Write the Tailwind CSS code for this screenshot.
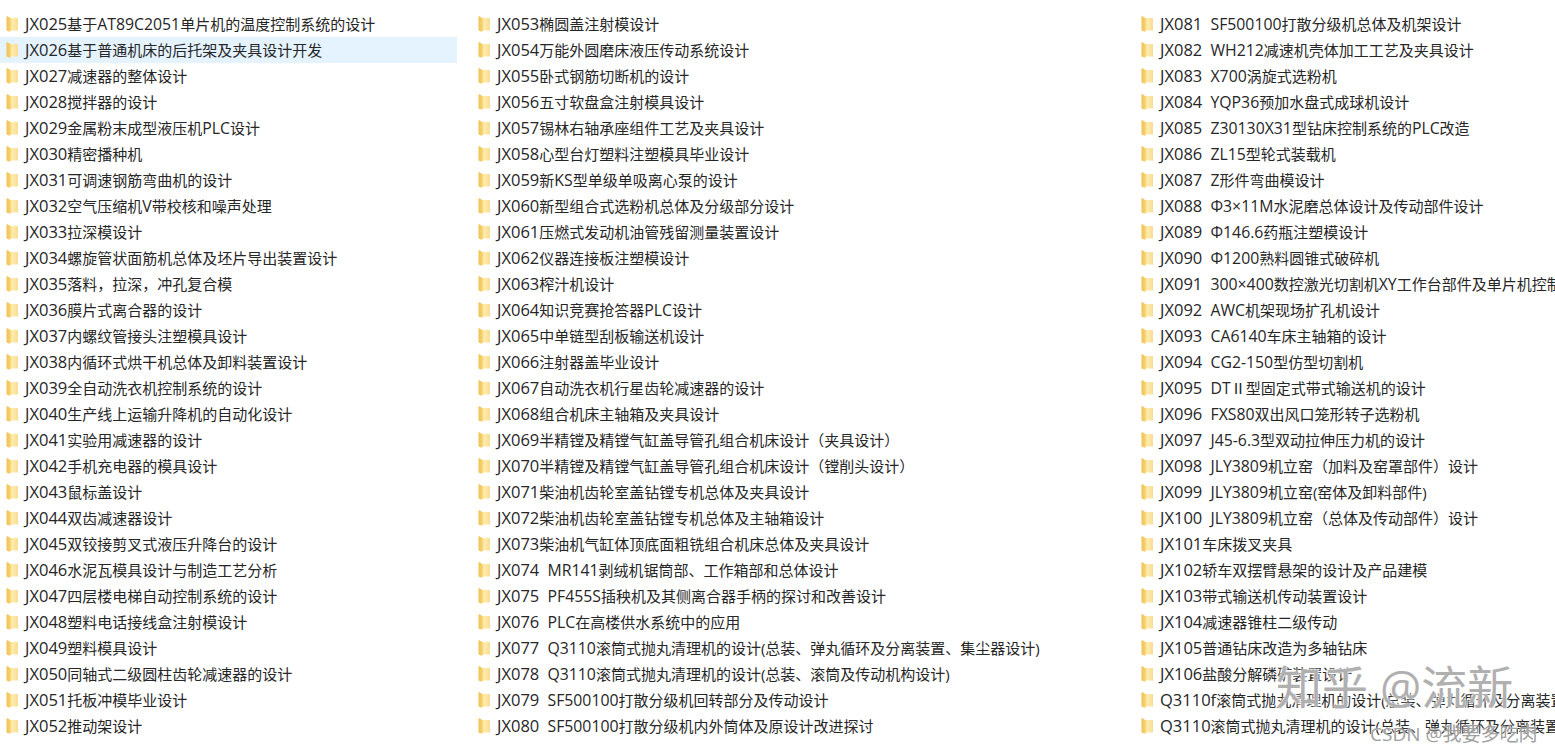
<!DOCTYPE html>
<html lang="zh-CN">
<head>
    <meta charset="UTF-8">
    <title>JX 文件夹列表</title>
    <script src="https://cdn.jsdelivr.net/npm/@tailwindcss/browser@4"></script>
</head>
<body class="bg-white overflow-hidden">
    <svg class="absolute h-0 w-0">
        <defs>
            <linearGradient id="folderFill" x1="0" x2="1" y1="0" y2="0">
                <stop offset="0" stop-color="#f0c252"/>
                <stop offset="0.28" stop-color="#f5cf6c"/>
                <stop offset="0.5" stop-color="#feecb0"/>
                <stop offset="1" stop-color="#f9dc90"/>
            </linearGradient>
        </defs>
    </svg>
    <div class="relative h-[750px] w-[1555px] overflow-hidden pt-[11px] font-['Open_Sans','Noto_Sans_CJK_SC',sans-serif] text-[15px] leading-[26px] text-[#262626]">
        <div class="grid grid-cols-[472px_663px_420px]">
            <div id="col1"></div>
            <div id="col2"></div>
            <div id="col3"></div>
        </div>
        <div class="absolute left-[1276px] top-[658px] whitespace-pre text-[46px] leading-[56px] text-[#b0b0b0] [text-shadow:0_0_3px_#fff,0_0_3px_#fff]">知乎 @流新</div>
        <div class="absolute left-[1370px] top-[722px] whitespace-pre text-[19px] leading-[24px] text-[#a0a0a0] [text-shadow:0_0_2px_#fff]">CSDN @我要多吃肉</div>
    </div>

    <script>
        const col1 = ['JX025基于AT89C2051单片机的温度控制系统的设计','JX026基于普通机床的后托架及夹具设计开发','JX027减速器的整体设计','JX028搅拌器的设计','JX029金属粉末成型液压机PLC设计','JX030精密播种机','JX031可调速钢筋弯曲机的设计','JX032空气压缩机V带校核和噪声处理','JX033拉深模设计','JX034螺旋管状面筋机总体及坯片导出装置设计','JX035落料，拉深，冲孔复合模','JX036膜片式离合器的设计','JX037内螺纹管接头注塑模具设计','JX038内循环式烘干机总体及卸料装置设计','JX039全自动洗衣机控制系统的设计','JX040生产线上运输升降机的自动化设计','JX041实验用减速器的设计','JX042手机充电器的模具设计','JX043鼠标盖设计','JX044双齿减速器设计','JX045双铰接剪叉式液压升降台的设计','JX046水泥瓦模具设计与制造工艺分析','JX047四层楼电梯自动控制系统的设计','JX048塑料电话接线盒注射模设计','JX049塑料模具设计','JX050同轴式二级圆柱齿轮减速器的设计','JX051托板冲模毕业设计','JX052推动架设计'];
        const col2 = ['JX053椭圆盖注射模设计','JX054万能外圆磨床液压传动系统设计','JX055卧式钢筋切断机的设计','JX056五寸软盘盒注射模具设计','JX057锡林右轴承座组件工艺及夹具设计','JX058心型台灯塑料注塑模具毕业设计','JX059新KS型单级单吸离心泵的设计','JX060新型组合式选粉机总体及分级部分设计','JX061压燃式发动机油管残留测量装置设计','JX062仪器连接板注塑模设计','JX063榨汁机设计','JX064知识竞赛抢答器PLC设计','JX065中单链型刮板输送机设计','JX066注射器盖毕业设计','JX067自动洗衣机行星齿轮减速器的设计','JX068组合机床主轴箱及夹具设计','JX069半精镗及精镗气缸盖导管孔组合机床设计（夹具设计）','JX070半精镗及精镗气缸盖导管孔组合机床设计（镗削头设计）','JX071柴油机齿轮室盖钻镗专机总体及夹具设计','JX072柴油机齿轮室盖钻镗专机总体及主轴箱设计','JX073柴油机气缸体顶底面粗铣组合机床总体及夹具设计','JX074  MR141剥绒机锯筒部、工作箱部和总体设计','JX075  PF455S插秧机及其侧离合器手柄的探讨和改善设计','JX076  PLC在高楼供水系统中的应用','JX077  Q3110滚筒式抛丸清理机的设计(总装、弹丸循环及分离装置、集尘器设计)','JX078  Q3110滚筒式抛丸清理机的设计(总装、滚筒及传动机构设计)','JX079  SF500100打散分级机回转部分及传动设计','JX080  SF500100打散分级机内外筒体及原设计改进探讨'];
        const col3 = ['JX081  SF500100打散分级机总体及机架设计','JX082  WH212减速机壳体加工工艺及夹具设计','JX083  X700涡旋式选粉机','JX084  YQP36预加水盘式成球机设计','JX085  Z30130X31型钻床控制系统的PLC改造','JX086  ZL15型轮式装载机','JX087  Z形件弯曲模设计','JX088  Φ3×11M水泥磨总体设计及传动部件设计','JX089  Φ146.6药瓶注塑模设计','JX090  Φ1200熟料圆锥式破碎机','JX091  300×400数控激光切割机XY工作台部件及单片机控制设计','JX092  AWC机架现场扩孔机设计','JX093  CA6140车床主轴箱的设计','JX094  CG2-150型仿型切割机','JX095  DTⅡ型固定式带式输送机的设计','JX096  FXS80双出风口笼形转子选粉机','JX097  J45-6.3型双动拉伸压力机的设计','JX098  JLY3809机立窑（加料及窑罩部件）设计','JX099  JLY3809机立窑(窑体及卸料部件)','JX100  JLY3809机立窑（总体及传动部件）设计','JX101车床拨叉夹具','JX102轿车双摆臂悬架的设计及产品建模','JX103带式输送机传动装置设计','JX104减速器锥柱二级传动','JX105普通钻床改造为多轴钻床','JX106盐酸分解磷矿装置设计','Q3110f滚筒式抛丸清理机的设计(总装、弹丸循环及分离装置设计)','Q3110滚筒式抛丸清理机的设计(总装、弹丸循环及分离装置设计)'];

        const folder = `<svg class="h-[18px] w-[12px] shrink-0" viewBox="0 0 12 18"><path d="M0.5 1 3 2l1 1h8v12.5H4.5L4.5 17 0.5 15.5z" fill="url(#folderFill)"/></svg>`;

        // latin runs sit a bit larger than the CJK text in the screenshot, the code prefix most of all
        function withLatin(name) {
            const prefix = name.match(/^(JX\d+|Q3110f?)/)[0];
            const rest = name.slice(prefix.length).replace(/[A-Za-z0-9.\-×Φ ]+/g, run => `<span class="text-[15.8px]">${run}</span>`);
            return `<span class="text-[16.5px]">${prefix}</span>${rest}`;
        }

        function renderRows(id, rows) {
            document.getElementById(id).innerHTML = rows.map(name => {
                const selected = name.startsWith('JX026');
                return `<div class="flex h-[26px] items-center overflow-hidden whitespace-pre pl-[6px] ${selected ? 'w-[457px] bg-[#e5f3ff]' : ''}">${folder}<span class="ml-[7px]">${withLatin(name)}</span></div>`;
            }).join('');
        }
        renderRows('col1', col1);
        renderRows('col2', col2);
        renderRows('col3', col3);
    </script>
</body>
</html>
